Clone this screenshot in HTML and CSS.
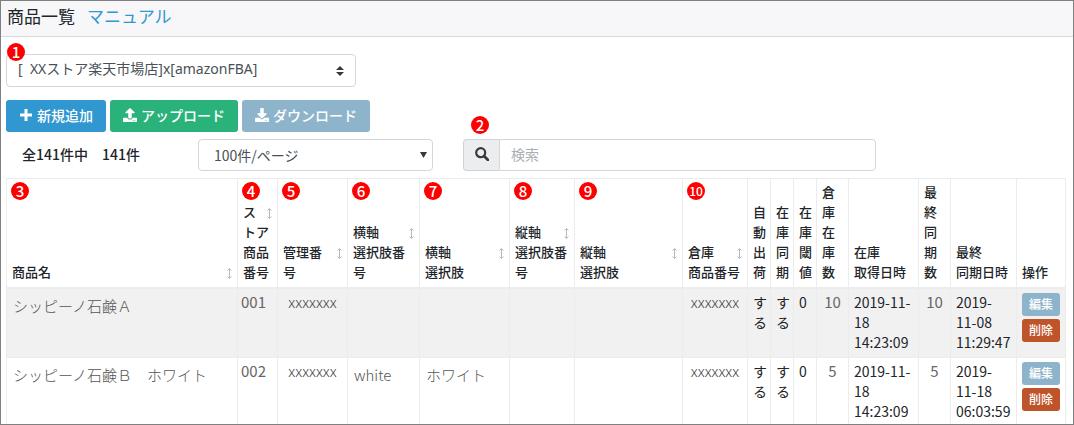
FILE: index.html
```html
<!DOCTYPE html>
<html lang="ja">
<head>
    <meta charset="UTF-8">
    <meta name="viewport" content="width=device-width, initial-scale=1.0">
    <title>商品一覧</title>
    <link rel="stylesheet" href="styles.css">
</head>
<body>
    <svg class="icon-defs" aria-hidden="true">
        <symbol id="icon-sort" viewBox="0 0 5 11">
            <path d="M2.5 .8v9.4M.5 2.5l2-2 2 2M.5 8.5l2 2 2-2" fill="none" stroke="currentColor" stroke-width=".9"/>
        </symbol>
    </svg>
    <div class="page">
        <header class="page-header">
            <h1>商品一覧</h1>
            <a href="#">マニュアル</a>
        </header>

        <main class="content">
            <div class="store">
                <select class="control store-select" aria-label="ストア">
                    <option>[&nbsp; XXストア楽天市場店]x[amazonFBA]</option>
                </select>
                <svg class="store-caret" viewBox="0 0 8 10" aria-hidden="true"><path d="M4 0l4 4H0zM4 10L0 6h8z" fill="#343a40"/></svg>
                <span class="badge badge-store">1</span>
            </div>

            <div class="buttons">
                <button type="button" class="btn btn-add">
                    <svg class="btn-icon" viewBox="0 0 14 14" aria-hidden="true"><path d="M5.500 1h3v4.500H13v3H8.500V13h-3V8.500H1v-3h4.500z" fill="currentColor"/></svg>
                    新規追加
                </button>
                <button type="button" class="btn btn-upload">
                    <svg class="btn-icon" viewBox="0 0 512 512" aria-hidden="true"><path d="M296 384h-80c-13 0-24-11-24-24V192h-88c-18 0-27-21-14-34L242 6c8-8 20-8 28 0l152 152c13 13 4 34-14 34h-88v168c0 13-11 24-24 24zm216-8v112c0 13-11 24-24 24H24c-13 0-24-11-24-24V376c0-13 11-24 24-24h136v8c0 31 25 56 56 56h80c31 0 56-25 56-56v-8h136c13 0 24 11 24 24zM388 464a20 20 0 1 0-40 0 20 20 0 0 0 40 0zm64 0a20 20 0 1 0-40 0 20 20 0 0 0 40 0z" fill="currentColor"/></svg>
                    アップロード
                </button>
                <button type="button" class="btn btn-download">
                    <svg class="btn-icon" viewBox="0 0 512 512" aria-hidden="true"><path d="M216 0h80c13 0 24 11 24 24v168h88c18 0 27 21 14 34L270 378c-8 8-20 8-28 0L90 226c-13-13-4-34 14-34h88V24c0-13 11-24 24-24zm296 376v112c0 13-11 24-24 24H24c-13 0-24-11-24-24V376c0-13 11-24 24-24h147l49 49c20 20 52 20 72 0l49-49h147c13 0 24 11 24 24zM388 464a20 20 0 1 0-40 0 20 20 0 0 0 40 0zm64 0a20 20 0 1 0-40 0 20 20 0 0 0 40 0z" fill="currentColor"/></svg>
                    ダウンロード
                </button>
            </div>

            <div class="filters">
                <p class="count">全141件中　141件</p>
                <div class="per-page">
                    <select class="control" aria-label="表示件数">
                        <option>100件/ページ</option>
                    </select>
                    <svg class="per-page-caret" viewBox="0 0 7 6" aria-hidden="true"><path d="M0 0h7L3.500 6z" fill="#343a40"/></svg>
                </div>
                <div class="search">
                    <label class="search-label" for="search">
                        <svg viewBox="0 0 14 14" role="img" aria-label="検索"><circle cx="5.700" cy="5.700" r="4.500" fill="none" stroke="currentColor" stroke-width="2.200"/><path d="M9 9l4 4" stroke="currentColor" stroke-width="2.600" stroke-linecap="round"/></svg>
                    </label>
                    <input type="text" id="search" class="control" placeholder="検索">
                    <span class="badge badge-search">2</span>
                </div>
            </div>

            <table class="items">
                <colgroup>
                    <col>
                    <col class="col-store-code">
                    <col class="col-code">
                    <col class="col-h-code">
                    <col class="col-h-name">
                    <col class="col-v-code">
                    <col class="col-v-name">
                    <col class="col-warehouse">
                    <col class="col-flag">
                    <col class="col-flag">
                    <col class="col-flag">
                    <col class="col-stock">
                    <col class="col-stock-date">
                    <col class="col-stock">
                    <col class="col-sync-date">
                    <col class="col-actions">
                </colgroup>
                <thead>
                    <tr>
                        <th><span class="badge">3</span><svg class="sort"><use href="#icon-sort"/></svg>商品名</th>
                        <th><span class="badge">4</span><svg class="sort"><use href="#icon-sort"/></svg>ストア<br>商品番号</th>
                        <th><span class="badge">5</span><svg class="sort"><use href="#icon-sort"/></svg>管理番号</th>
                        <th><span class="badge">6</span><svg class="sort"><use href="#icon-sort"/></svg>横軸<br>選択肢番号</th>
                        <th><span class="badge">7</span><svg class="sort"><use href="#icon-sort"/></svg>横軸<br>選択肢</th>
                        <th><span class="badge">8</span><svg class="sort"><use href="#icon-sort"/></svg>縦軸<br>選択肢番号</th>
                        <th><span class="badge">9</span><svg class="sort"><use href="#icon-sort"/></svg>縦軸<br>選択肢</th>
                        <th><span class="badge badge-wide">10</span><svg class="sort"><use href="#icon-sort"/></svg>倉庫<br>商品番号</th>
                        <th>自動出荷</th>
                        <th>在庫同期</th>
                        <th>在庫閾値</th>
                        <th class="stock-head">倉庫在庫数</th>
                        <th>在庫<br>取得日時</th>
                        <th class="stock-head">最終同期数</th>
                        <th>最終<br>同期日時</th>
                        <th>操作</th>
                    </tr>
                </thead>
                <tbody>
                    <tr>
                        <td class="name">シッピーノ石鹸Ａ</td>
                        <td class="number">001</td>
                        <td class="code">xxxxxxx</td>
                        <td class="name"></td>
                        <td class="name"></td>
                        <td></td>
                        <td></td>
                        <td class="code">xxxxxxx</td>
                        <td>する</td>
                        <td>する</td>
                        <td>0</td>
                        <td class="number stock">10</td>
                        <td>2019-11-18 14:23:09</td>
                        <td class="number stock">10</td>
                        <td>2019-11-08 11:29:47</td>
                        <td>
                            <div class="actions">
                                <button type="button" class="edit-button">編集</button>
                                <button type="button" class="delete-button">削除</button>
                            </div>
                        </td>
                    </tr>
                    <tr>
                        <td class="name">シッピーノ石鹸Ｂ　ホワイト</td>
                        <td class="number">002</td>
                        <td class="code">xxxxxxx</td>
                        <td class="name">white</td>
                        <td class="name">ホワイト</td>
                        <td></td>
                        <td></td>
                        <td class="code">xxxxxxx</td>
                        <td>する</td>
                        <td>する</td>
                        <td>0</td>
                        <td class="number stock">5</td>
                        <td>2019-11-18 14:23:09</td>
                        <td class="number stock">5</td>
                        <td>2019-11-18 06:03:59</td>
                        <td>
                            <div class="actions">
                                <button type="button" class="edit-button">編集</button>
                                <button type="button" class="delete-button">削除</button>
                            </div>
                        </td>
                    </tr>
                </tbody>
            </table>
        </main>
    </div>
</body>
</html>
```
FILE: styles.css
```css
* {
    box-sizing: border-box;
}

body {
    margin: 0;
    font-family: "Noto Sans CJK JP", sans-serif;
    font-size: 14px;
    line-height: 20px;
    color: #212529;
    background: #fff;
}

button,
input,
select {
    font-family: inherit;
    font-size: 14px;
    line-height: 20px;
}

.icon-defs {
    display: none;
}

.page {
    height: 100vh;
    overflow: hidden;
    border: 1px solid #808080;
}

.page-header {
    display: flex;
    gap: 12px;
    padding: 3px 6px 8px;
    font-size: 17px;
    line-height: 24px;
    background: #f7f7f9;
    border-bottom: 1px solid #d9dadc;
}

.page-header h1 {
    margin: 0;
    font-size: 17px;
    font-weight: 400;
}

.page-header a {
    color: #3097d1;
    text-decoration: none;
}

.content {
    padding: 17px 7px 0 5px;
}

/* form controls */
.control {
    display: block;
    width: 100%;
    height: 32px;
    padding: 0 11px;
    color: #495057;
    background: #fff;
    border: 1px solid #d4d6d8;
    border-radius: 4px;
    appearance: none;
}

.control::placeholder {
    color: #aaafb4;
    opacity: 1;
}

.store {
    position: relative;
    max-width: 350px;
    margin-bottom: 13px;
}

.store-select {
    height: 33px;
    padding-bottom: 4px;
    font-family: "Noto Sans", "Noto Sans CJK JP", sans-serif;
}

.store-caret {
    position: absolute;
    top: 12px;
    right: 12px;
    width: 8px;
    height: 10px;
    pointer-events: none;
}

.buttons {
    display: flex;
    gap: 4px;
    margin-bottom: 7px;
}

.btn {
    display: flex;
    align-items: center;
    gap: 4px;
    height: 32px;
    padding: 0 13px 3px;
    color: #fff;
    font-weight: 500;
    border: none;
    border-radius: 3px;
    cursor: pointer;
}

.btn-icon {
    width: 14px;
    height: 14px;
}

.btn-add {
    background: #3097d1;
}

.btn-upload {
    background: #2ab27b;
}

.btn-download {
    background: #8eb4cb;
}

.filters {
    display: grid;
    grid-template-columns: 192px minmax(0, 235px) minmax(0, 443px);
    margin-bottom: 7px;
}

.count {
    margin: 0;
    padding: 5px 16px;
    font-weight: 500;
}

.per-page {
    position: relative;
}

.per-page .control {
    padding: 0 15px;
}

.per-page-caret {
    position: absolute;
    top: 13px;
    right: 6px;
    width: 7px;
    height: 6px;
    pointer-events: none;
}

.search {
    position: relative;
    display: flex;
    margin-left: 30px;
}

.search-label {
    display: flex;
    align-items: center;
    justify-content: center;
    flex: 0 0 36px;
    padding-bottom: 3px;
    color: #343a40;
    background: #ebedef;
    border: 1px solid #d0d2d4;
    border-right: none;
    border-radius: 4px 0 0 4px;
}

.search-label svg {
    width: 14px;
    height: 14px;
}

.search .control {
    padding-bottom: 3px;
    border-radius: 0 4px 4px 0;
}

/* numbered markers */
.badge {
    position: absolute;
    top: 3px;
    left: 4px;
    width: 18px;
    height: 18px;
    color: #fff;
    font-size: 15px;
    font-weight: 500;
    line-height: 17px;
    text-align: center;
    background: #f00;
    border-radius: 50%;
}

.badge-wide {
    font-size: 12px;
}

.badge-store {
    top: -11px;
    left: 1px;
}

.badge-search {
    top: -23px;
    left: 8px;
}

/* item list */
.items {
    width: 100%;
    table-layout: fixed;
    border-collapse: collapse;
}

.items th,
.items td {
    padding: 3px 5px 5px;
    text-align: left;
    border: 1px solid #ececec;
}

.items th {
    position: relative;
    font-size: 13px;
    font-weight: 500;
    vertical-align: bottom;
    border-bottom-width: 2px;
}

.items td {
    vertical-align: top;
}

.items tbody tr:nth-child(odd) {
    background: #f1f1f1;
}

.col-store-code {
    width: 40px;
}

.col-code,
.col-stock-date {
    width: 70px;
}

.col-h-code {
    width: 72px;
}

.col-h-name {
    width: 90px;
}

.col-v-code,
.col-warehouse {
    width: 65px;
}

.col-v-name {
    width: 108px;
}

.col-flag {
    width: 23px;
}

.col-stock {
    width: 32px;
}

.col-sync-date {
    width: 66px;
}

.col-actions {
    width: 49px;
}

.items .stock-head {
    padding-right: 13px;
}

.sort {
    float: right;
    width: 5px;
    height: 11px;
    margin: 6px 0 3px 8px;
    color: #a9b4bb;
}

.items .name {
    padding-top: 7px;
    padding-left: 6px;
    color: #555;
    font-size: 15px;
    font-weight: 300;
}

.items .number {
    padding-left: 3px;
    color: #666;
    font-size: 15px;
}

.items .stock {
    padding-right: 3px;
    text-align: center;
}

.items .code {
    color: #444;
    font-size: 15px;
    font-weight: 300;
    text-align: center;
}

.actions {
    display: grid;
    gap: 3px;
    padding-top: 1px;
}

.actions button {
    height: 23px;
    padding: 0 0 2px;
    color: #fff;
    font-size: 12px;
    font-weight: 500;
    border: none;
    border-radius: 3px;
    cursor: pointer;
}

.actions .edit-button {
    background: #8eb4cb;
}

.actions .delete-button {
    background: #bf5329;
}
```
